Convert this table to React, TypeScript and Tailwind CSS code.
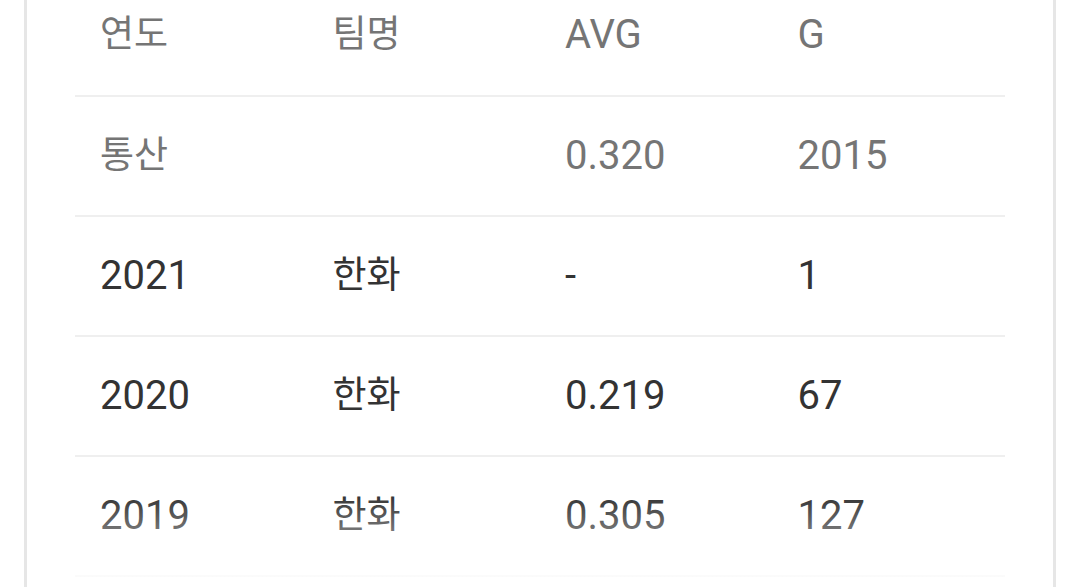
const columns = ["연도", "팀명", "AVG", "G"];

interface Row {
  year: string;
  team: string;
  avg: string;
  games: string;
  muted?: boolean;
}

const rows: Row[] = [
  { year: "통산", team: "", avg: "0.320", games: "2015", muted: true },
  { year: "2021", team: "한화", avg: "-", games: "1" },
  { year: "2020", team: "한화", avg: "0.219", games: "67" },
  { year: "2019", team: "한화", avg: "0.305", games: "127" },
];

// hangul glyphs render a bit smaller than the latin digits in the source
const isHangul = (s: string) => /[가-힣]/.test(s);

function Cell({ children }: { children?: string }) {
  return (
    <div
      className={`flex-1 pl-[25px] whitespace-nowrap ${
        children && isHangul(children) ? "text-[37px]" : ""
      }`}
    >
      {children}
    </div>
  );
}

export default function App() {
  return (
    <div
      className="h-[587px] w-[1080px] overflow-hidden bg-white"
      style={{ fontFamily: "Roboto, 'Noto Sans CJK KR', sans-serif" }}
    >
      <div className="ml-[24px] h-full w-[1032px] border-x-[3px] border-[#e6e6e6] px-[48px]">
        <div className="relative text-[40px] leading-[48px]">
          <div className="flex h-[97px] items-center border-b-2 border-[#efefef] pb-[26px] text-[#757575]">
            {columns.map((c) => (
              <Cell key={c}>{c}</Cell>
            ))}
          </div>
          {rows.map((r) => (
            <div
              key={r.year}
              className={`flex h-[120px] items-center border-b-2 border-[#efefef] ${
                r.muted ? "text-[#757575]" : "text-[#333333]"
              }`}
            >
              <Cell>{r.year}</Cell>
              <Cell>{r.team}</Cell>
              <Cell>{r.avg}</Cell>
              <Cell>{r.games}</Cell>
            </div>
          ))}
          <div className="pointer-events-none absolute inset-x-0 top-[495px] h-[110px] bg-gradient-to-b from-white/0 to-white" />
        </div>
      </div>
    </div>
  );
}
